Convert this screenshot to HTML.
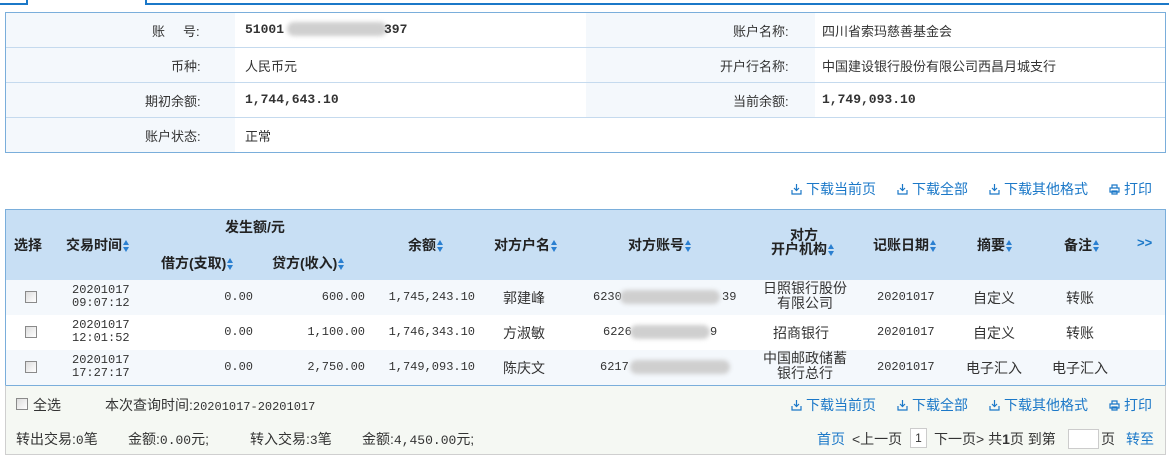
<!DOCTYPE html>
<html><head><meta charset="utf-8"><style>
*{margin:0;padding:0;box-sizing:border-box}
body{width:1169px;height:462px;background:#fff;font-family:"Liberation Sans","Noto Sans CJK SC",sans-serif;font-size:13px;color:#333;position:relative;overflow:hidden}
.a{position:absolute;white-space:nowrap}
.m{font-family:"Liberation Mono","Noto Sans CJK SC",monospace;font-size:12px}
.b{font-weight:bold}
.v{font-size:13px}
.hd{font-weight:bold;color:#222;font-size:14px}
.ar{display:inline-block;width:7px;height:12px;vertical-align:middle;margin-left:1px;position:relative}
.ar:before{content:"";position:absolute;left:0;top:0;border-left:3.5px solid transparent;border-right:3.5px solid transparent;border-bottom:5px solid #2a7fd0}
.ar:after{content:"";position:absolute;left:0;top:7px;border-left:3.5px solid transparent;border-right:3.5px solid transparent;border-top:5px solid #2a7fd0}
.cb{position:absolute;width:12px;height:12px;border:1px solid #8a8a8a;background:linear-gradient(135deg,#ddd,#fff)}
.lk{color:#1b78c8;font-size:14px}
.blur{position:absolute;height:14px;background:#cfcfcf;border-radius:7px;filter:blur(2px)}
.ic{display:inline-block;width:11px;height:11px;vertical-align:-1px;margin-right:4px}
.ft{font-size:14px}
.ft .m{font-size:13px}
</style></head><body>
<div class="a" style="left:0;top:0;width:28px;height:5px;border-right:2px solid #1b78c8;border-bottom:2px solid #1b78c8"></div>
<div class="a" style="left:145px;top:0;width:1024px;height:5px;border-left:2px solid #1b78c8;border-bottom:2px solid #1b78c8"></div>
<div class="a" style="left:5px;top:12px;width:1161px;height:141px;border:1px solid #7aaedb"></div>
<div class="a" style="left:6px;top:13px;width:229px;height:139px;background:#f4f8fc"></div>
<div class="a" style="left:586px;top:13px;width:229px;height:104px;background:#f4f8fc"></div>
<div class="a" style="left:6px;top:47px;width:1159px;height:1px;background:#c5daee"></div>
<div class="a" style="left:6px;top:82px;width:1159px;height:1px;background:#c5daee"></div>
<div class="a" style="left:6px;top:117px;width:1159px;height:1px;background:#c5daee"></div>
<div class="a v" style="left:152px;top:21px">账&nbsp;&nbsp;&nbsp;&nbsp;&nbsp;号:</div>
<div class="a m b" style="left:245px;top:22px;font-size:13px">51001</div>
<div class="blur" style="left:287px;top:22px;width:100px"></div>
<div class="a m b" style="left:384px;top:22px;font-size:13px">397</div>
<div class="a v" style="left:171px;top:56px">币种:</div>
<div class="a v" style="left:245px;top:56px">人民币元</div>
<div class="a v" style="left:145px;top:91px">期初余额:</div>
<div class="a m b" style="left:245px;top:92px;font-size:13px">1,744,643.10</div>
<div class="a v" style="left:145px;top:126px">账户状态:</div>
<div class="a v" style="left:245px;top:126px">正常</div>
<div class="a v" style="left:733px;top:21px">账户名称:</div>
<div class="a v" style="left:822px;top:21px">四川省索玛慈善基金会</div>
<div class="a v" style="left:720px;top:56px">开户行名称:</div>
<div class="a v" style="left:822px;top:56px">中国建设银行股份有限公司西昌月城支行</div>
<div class="a v" style="left:733px;top:91px">当前余额:</div>
<div class="a m b" style="left:822px;top:92px;font-size:13px">1,749,093.10</div>
<div class="a lk" style="left:791px;top:179px"><svg class="ic" viewBox="0 0 11 11"><path d="M5.5 0v6M3 4l2.5 2.5L8 4M1 6v4h9V6" fill="none" stroke="#1b78c8" stroke-width="1.2"/></svg>下载当前页</div>
<div class="a lk" style="left:897px;top:179px"><svg class="ic" viewBox="0 0 11 11"><path d="M5.5 0v6M3 4l2.5 2.5L8 4M1 6v4h9V6" fill="none" stroke="#1b78c8" stroke-width="1.2"/></svg>下载全部</div>
<div class="a lk" style="left:989px;top:179px"><svg class="ic" viewBox="0 0 11 11"><path d="M5.5 0v6M3 4l2.5 2.5L8 4M1 6v4h9V6" fill="none" stroke="#1b78c8" stroke-width="1.2"/></svg>下载其他格式</div>
<div class="a lk" style="left:1109px;top:179px"><svg class="ic" viewBox="0 0 11 11"><path d="M3 4V1h5v3M1 4h9v4H1zM3 7h5v3H3z" fill="none" stroke="#1b78c8" stroke-width="1.2"/></svg>打印</div>
<div class="a" style="left:5px;top:209px;width:1161px;height:177px;border:1px solid #7aaedb;border-bottom:none"></div>
<div class="a" style="left:6px;top:210px;width:1159px;height:70px;background:#c8dff4"></div>
<div class="a" style="left:6px;top:280px;width:1159px;height:35px;background:#f4f8fc"></div>
<div class="a" style="left:6px;top:350px;width:1159px;height:35px;background:#f4f8fc"></div>
<div class="a hd" style="left:14px;top:235px">选择</div>
<div class="a hd" style="left:66px;top:235px">交易时间<i class="ar"></i></div>
<div class="a hd" style="left:225px;top:217px">发生额/元</div>
<div class="a hd" style="left:161px;top:253px">借方(支取)<i class="ar"></i></div>
<div class="a hd" style="left:272px;top:253px">贷方(收入)<i class="ar"></i></div>
<div class="a hd" style="left:408px;top:235px">余额<i class="ar"></i></div>
<div class="a hd" style="left:494px;top:235px">对方户名<i class="ar"></i></div>
<div class="a hd" style="left:628px;top:235px">对方账号<i class="ar"></i></div>
<div class="a hd" style="left:790px;top:228px;line-height:15px">对方</div>
<div class="a hd" style="left:771px;top:242px;line-height:15px">开户机构<i class="ar"></i></div>
<div class="a hd" style="left:873px;top:235px">记账日期<i class="ar"></i></div>
<div class="a hd" style="left:977px;top:235px">摘要<i class="ar"></i></div>
<div class="a hd" style="left:1064px;top:235px">备注<i class="ar"></i></div>
<div class="a" style="left:1137px;top:235px;color:#1b78c8;font-weight:bold">&gt;&gt;</div>
<div class="cb" style="left:25px;top:291px"></div>
<div class="cb" style="left:25px;top:326px"></div>
<div class="cb" style="left:25px;top:361px"></div>
<div class="a m" style="left:72px;top:284px;line-height:13px">20201017<br>09:07:12</div>
<div class="a m" style="left:72px;top:319px;line-height:13px">20201017<br>12:01:52</div>
<div class="a m" style="left:72px;top:354px;line-height:13px">20201017<br>17:27:17</div>
<div class="a m" style="right:916px;top:290px">0.00</div>
<div class="a m" style="right:916px;top:325px">0.00</div>
<div class="a m" style="right:916px;top:360px">0.00</div>
<div class="a m" style="right:804px;top:290px">600.00</div>
<div class="a m" style="right:804px;top:325px">1,100.00</div>
<div class="a m" style="right:804px;top:360px">2,750.00</div>
<div class="a m" style="right:694px;top:290px">1,745,243.10</div>
<div class="a m" style="right:694px;top:325px">1,746,343.10</div>
<div class="a m" style="right:694px;top:360px">1,749,093.10</div>
<div class="a" style="left:503px;top:288px;font-size:14px">郭建峰</div>
<div class="a" style="left:503px;top:323px;font-size:14px">方淑敏</div>
<div class="a" style="left:503px;top:358px;font-size:14px">陈庆文</div>
<div class="a m" style="left:593px;top:290px">6230</div>
<div class="blur" style="left:620px;top:290px;width:100px"></div>
<div class="a m" style="left:722px;top:290px">39</div>
<div class="a m" style="left:603px;top:325px">6226</div>
<div class="blur" style="left:630px;top:325px;width:80px"></div>
<div class="a m" style="left:710px;top:325px">9</div>
<div class="a m" style="left:600px;top:360px">6217</div>
<div class="blur" style="left:630px;top:360px;width:100px"></div>
<div class="a" style="left:761px;top:281px;line-height:15px;text-align:center;width:88px;font-size:14px">日照银行股份<br>有限公司</div>
<div class="a" style="left:773px;top:323px;font-size:14px">招商银行</div>
<div class="a" style="left:761px;top:351px;line-height:15px;text-align:center;width:88px;font-size:14px">中国邮政储蓄<br>银行总行</div>
<div class="a m" style="left:877px;top:290px">20201017</div>
<div class="a m" style="left:877px;top:325px">20201017</div>
<div class="a m" style="left:877px;top:360px">20201017</div>
<div class="a" style="left:973px;top:288px;font-size:14px">自定义</div>
<div class="a" style="left:973px;top:323px;font-size:14px">自定义</div>
<div class="a" style="left:966px;top:358px;font-size:14px">电子汇入</div>
<div class="a" style="left:1066px;top:288px;font-size:14px">转账</div>
<div class="a" style="left:1066px;top:323px;font-size:14px">转账</div>
<div class="a" style="left:1052px;top:358px;font-size:14px">电子汇入</div>
<div class="a" style="left:5px;top:385px;width:1161px;height:70px;background:#f5f8f3;border:1px solid #cfcfcf;border-top:1px solid #7aaedb"></div>
<div class="cb" style="left:16px;top:398px"></div>
<div class="a ft" style="left:33px;top:395px">全选</div>
<div class="a ft" style="left:105px;top:395px">本次查询时间:<span class="m" style="font-size:12px">20201017-20201017</span></div>
<div class="a lk" style="left:791px;top:395px"><svg class="ic" viewBox="0 0 11 11"><path d="M5.5 0v6M3 4l2.5 2.5L8 4M1 6v4h9V6" fill="none" stroke="#1b78c8" stroke-width="1.2"/></svg>下载当前页</div>
<div class="a lk" style="left:897px;top:395px"><svg class="ic" viewBox="0 0 11 11"><path d="M5.5 0v6M3 4l2.5 2.5L8 4M1 6v4h9V6" fill="none" stroke="#1b78c8" stroke-width="1.2"/></svg>下载全部</div>
<div class="a lk" style="left:989px;top:395px"><svg class="ic" viewBox="0 0 11 11"><path d="M5.5 0v6M3 4l2.5 2.5L8 4M1 6v4h9V6" fill="none" stroke="#1b78c8" stroke-width="1.2"/></svg>下载其他格式</div>
<div class="a lk" style="left:1109px;top:395px"><svg class="ic" viewBox="0 0 11 11"><path d="M3 4V1h5v3M1 4h9v4H1zM3 7h5v3H3z" fill="none" stroke="#1b78c8" stroke-width="1.2"/></svg>打印</div>
<div class="a ft" style="left:16px;top:429px">转出交易:<span class="m">0</span>笔</div>
<div class="a ft" style="left:128px;top:429px">金额:<span class="m">0.00</span>元;</div>
<div class="a ft" style="left:250px;top:429px">转入交易:<span class="m">3</span>笔</div>
<div class="a ft" style="left:362px;top:429px">金额:<span class="m">4,450.00</span>元;</div>
<div class="a lk" style="left:817px;top:429px">首页</div>
<div class="a ft" style="left:852px;top:429px">&lt;上一页</div>
<div class="a" style="left:910px;top:428px;width:17px;height:20px;border:1px solid #ccc;background:#fff;text-align:center;font-size:12px;line-height:18px">1</div>
<div class="a ft" style="left:934px;top:429px">下一页&gt; 共<b>1</b>页 到第</div>
<div class="a" style="left:1068px;top:429px;width:31px;height:20px;border:1px solid #ccc;background:#fff"></div>
<div class="a ft" style="left:1101px;top:429px">页</div>
<div class="a lk" style="left:1126px;top:429px">转至</div>
</body></html>
